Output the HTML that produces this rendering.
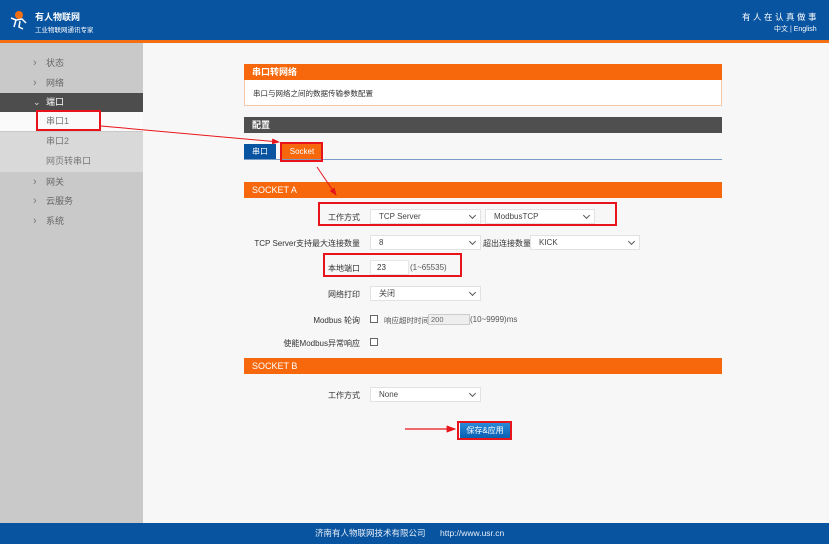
<!DOCTYPE html>
<html><head><meta charset="utf-8"><style>
*{margin:0;padding:0;box-sizing:border-box}
body{width:829px;height:544px;overflow:hidden;background:#f7f7f7;font-family:"Liberation Sans","Noto Sans CJK SC",sans-serif;font-size:8px;color:#333;position:relative}
.a{position:absolute}
.hdr{left:0;top:0;width:829px;height:40px;background:#0854a0}
.ol{left:0;top:40px;width:829px;height:3px;background:#f36f13}
.sb{left:0;top:43px;width:143px;height:480px;background:#c9c9c9}
.si{left:0;width:143px;height:19px;line-height:19px;color:#666;font-size:9px;padding-left:46px}
.si .c{position:absolute;left:33px;top:0;color:#777;font-size:11px}
.ft{left:0;top:523px;width:829px;height:21px;background:#0854a0;color:#e8eef7;font-size:8.5px;line-height:21px}
.bar{left:244px;width:478px;height:16px;background:#f6680b;color:#fff;line-height:16px;padding-left:8px;font-size:9px}
.sel{position:absolute;height:15px;background:#fff;border:1px solid #e2e2e2;line-height:13px;padding-left:8px;font-size:8px;color:#444}
.sel:after{content:"";position:absolute;right:5px;top:3px;width:4px;height:4px;border-right:1px solid #555;border-bottom:1px solid #555;transform:rotate(45deg)}
.lb{position:absolute;text-align:right;width:200px;font-size:8px;color:#333}
.rb{position:absolute;border:2px solid #e8141b}
.cb{position:absolute;width:8px;height:8px;border:1px solid #666;background:#fff}
</style></head><body>
<div class="a hdr"></div>
<svg class="a" style="left:8px;top:9px" width="22" height="22" viewBox="0 0 22 22"><circle cx="11" cy="6" r="4" fill="#f36f13"/><path d="M3 9 L8 11 L6 18 M8 11 L14 10 L18 14 M12 12 L11 18 L15 20" stroke="#fff" stroke-width="1.5" fill="none"/></svg>
<div class="a" style="left:35px;top:10px;color:#fff;font-size:9px;font-weight:bold">有人物联网</div>
<div class="a" style="left:35px;top:24px;color:#fff;font-size:6.5px">工业物联网通讯专家</div>
<div class="a" style="left:742px;top:11px;color:#fff;font-size:8.5px;letter-spacing:2.5px">有人在认真做事</div>
<div class="a" style="left:774px;top:24px;color:#fff;font-size:7px">中文 | English</div>
<div class="a ol"></div>
<div class="a sb"></div>
<div class="a si" style="top:54px"><span class="c">›</span>状态</div>
<div class="a si" style="top:74px"><span class="c">›</span>网络</div>
<div class="a si" style="top:93px;background:#4d4d4d;color:#fff"><span class="c" style="color:#ddd;font-size:9px">⌄</span>端口</div>
<div class="a si" style="top:112px;background:#fafafa;color:#777">串口1</div>
<div class="a si" style="top:132px;background:#d9d9d9;height:40px"></div>
<div class="a si" style="top:132px;color:#777">串口2</div>
<div class="a si" style="top:152px;color:#777">网页转串口</div>
<div class="a si" style="top:173px"><span class="c">›</span>网关</div>
<div class="a si" style="top:192px"><span class="c">›</span>云服务</div>
<div class="a si" style="top:212px"><span class="c">›</span>系统</div>
<div class="rb" style="left:36px;top:110px;width:65px;height:21px"></div>

<div class="a bar" style="top:64px;font-weight:bold">串口转网络</div>
<div class="a" style="left:244px;top:80px;width:478px;height:26px;background:#fff;border:1px solid #f5c9a8;border-top:none;padding:8px 0 0 8px;font-size:7.5px">串口与网络之间的数据传输参数配置</div>
<div class="a bar" style="top:117px;background:#4f4f4f;font-weight:bold">配置</div>
<div class="a" style="left:244px;top:144px;width:32px;height:16px;background:#0854a0;color:#fff;line-height:16px;text-align:center;font-size:8px">串口</div>
<div class="a" style="left:282px;top:144px;width:40px;height:16px;background:#f6680b;color:#fff;line-height:16px;text-align:center;font-size:8px">Socket</div>
<div class="a" style="left:244px;top:159px;width:478px;height:1px;background:#7a9cc6"></div>
<div class="rb" style="left:280px;top:142px;width:43px;height:20px"></div>

<div class="a bar" style="top:182px">SOCKET A</div>
<div class="lb" style="left:160px;top:212px">工作方式</div>
<div class="sel" style="left:370px;top:209px;width:111px">TCP Server</div>
<div class="sel" style="left:485px;top:209px;width:110px">ModbusTCP</div>
<div class="rb" style="left:318px;top:202px;width:299px;height:24px"></div>
<div class="lb" style="left:160px;top:238px">TCP Server支持最大连接数量</div>
<div class="sel" style="left:370px;top:235px;width:111px">8</div>
<div class="a" style="left:483px;top:238px;font-size:8px">超出连接数量</div>
<div class="sel" style="left:530px;top:235px;width:110px">KICK</div>
<div class="lb" style="left:160px;top:263px">本地端口</div>
<div class="a" style="left:370px;top:260px;width:39px;height:15px;background:#fff;border:1px solid #e6e6e6;padding:2px 0 0 6px;font-size:8px">23</div>
<div class="a" style="left:410px;top:263px;font-size:8px;color:#555">(1~65535)</div>
<div class="rb" style="left:323px;top:253px;width:139px;height:24px"></div>
<div class="lb" style="left:160px;top:289px">网络打印</div>
<div class="sel" style="left:370px;top:286px;width:111px">关闭</div>
<div class="lb" style="left:160px;top:315px">Modbus 轮询</div>
<div class="cb" style="left:370px;top:315px"></div>
<div class="a" style="left:384px;top:315px;font-size:7.5px;color:#555">响应超时时间</div>
<div class="a" style="left:428px;top:314px;width:42px;height:11px;background:#eee;border:1px solid #ccc;font-size:7.5px;padding-left:2px;color:#666">200</div>
<div class="a" style="left:470px;top:315px;font-size:8px;color:#555">(10~9999)ms</div>
<div class="lb" style="left:160px;top:338px">使能Modbus异常响应</div>
<div class="cb" style="left:370px;top:338px"></div>
<div class="a bar" style="top:358px">SOCKET B</div>
<div class="lb" style="left:160px;top:390px">工作方式</div>
<div class="sel" style="left:370px;top:387px;width:111px">None</div>
<div class="a" style="left:460px;top:423px;width:50px;height:15px;background:linear-gradient(#2a8ad8,#0a5fb0);color:#fff;font-size:8px;line-height:15px;text-align:center">保存&amp;应用</div>
<div class="rb" style="left:457px;top:421px;width:55px;height:19px"></div>

<svg class="a" style="left:0;top:0" width="829" height="544">
<defs><marker id="m" markerWidth="8" markerHeight="6" refX="7" refY="3" orient="auto"><path d="M0 0 L8 3 L0 6z" fill="#e8141b"/></marker></defs>
<line x1="101" y1="126" x2="279" y2="142" stroke="#e8141b" stroke-width="1" marker-end="url(#m)"/>
<line x1="317" y1="167" x2="336" y2="195" stroke="#e8141b" stroke-width="1" marker-end="url(#m)"/>
<line x1="405" y1="429" x2="455" y2="429" stroke="#e8141b" stroke-width="1.2" marker-end="url(#m)"/>
</svg>

<div class="a ft"><span style="position:absolute;left:315px">济南有人物联网技术有限公司</span><span style="position:absolute;left:440px">http://www.usr.cn</span></div>
</body></html>
